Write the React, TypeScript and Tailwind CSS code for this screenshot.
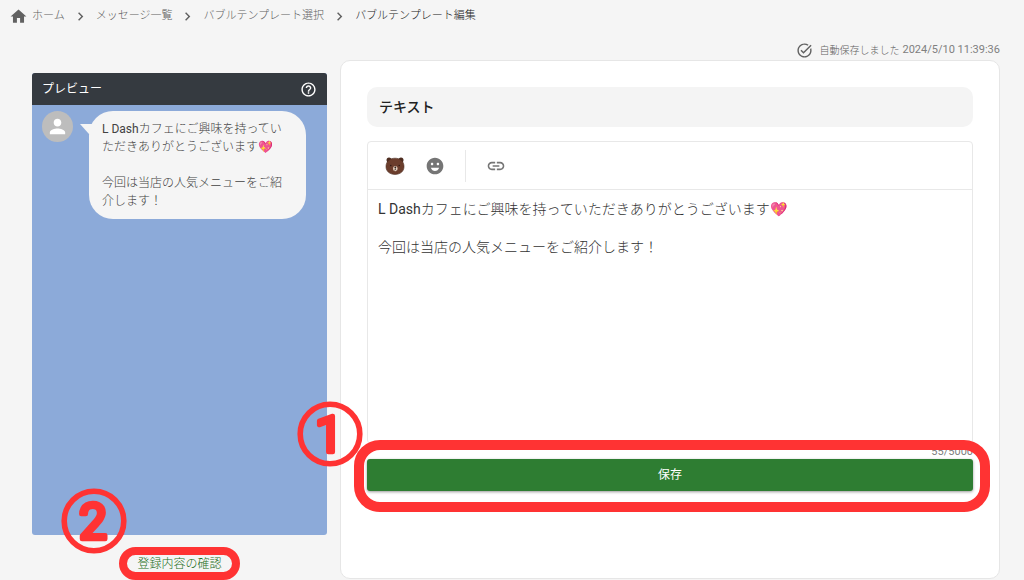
import { useState, type ReactNode } from "react";
import {
  MdChevronRight,
  MdEmojiEmotions,
  MdHelpOutline,
  MdHome,
  MdLink,
  MdPerson,
  MdTaskAlt,
} from "react-icons/md";

const MESSAGE =
  "L Dashカフェにご興味を持っていただきありがとうございます💖\n\n今回は当店の人気メニューをご紹介します！";

function Breadcrumbs() {
  return (
    <nav aria-label="breadcrumb" className="pt-[7px] pb-4 pl-[9px]">
      <ol className="flex h-[18px] items-center text-[11px] text-[#616161]">
        <li>
          <a href="#home" className="flex items-center gap-1">
            <MdHome className="size-[19px] text-[#616161]" />
            ホーム
          </a>
        </li>
        <Separator />
        <li>
          <a href="#messages">メッセージ一覧</a>
        </li>
        <Separator />
        <li>
          <a href="#templates">バブルテンプレート選択</a>
        </li>
        <Separator />
        <li aria-current="page" className="text-[#212121]">
          バブルテンプレート編集
        </li>
      </ol>
    </nav>
  );
}

function Separator() {
  return (
    <li aria-hidden="true" className="mx-[7px]">
      <MdChevronRight className="size-[17px] text-[#616161]" />
    </li>
  );
}

function StepMark({ children }: { children: ReactNode }) {
  return (
    <svg viewBox="0 0 66 66" className="size-[66px]">
      <circle cx="33" cy="33" r="29.8" fill="none" stroke="#ff3333" strokeWidth="5.6" />
      <text
        x="32"
        y="51"
        textAnchor="middle"
        fill="#ff3333"
        stroke="#ff3333"
        strokeWidth="4.500"
        strokeLinejoin="round"
        className="font-['Roboto',sans-serif] text-[50px] font-normal"
      >
        {children}
      </text>
    </svg>
  );
}

function BearIcon() {
  return (
    <svg viewBox="0 0 20 20" className="size-5">
      <circle cx="4" cy="4" r="2.500" fill="#4e2c20" />
      <circle cx="16" cy="4" r="2.500" fill="#4e2c20" />
      <path
        d="M10 2.200c5.300 0 9 3.200 9 8.400 0 4.800-3.600 7.800-9 7.800s-9-3-9-7.800C1 5.400 4.700 2.200 10 2.200z"
        fill="#6b3d2c"
        stroke="#4a2a1f"
        strokeWidth=".6"
      />
      <circle cx="5.800" cy="9.500" r=".7" fill="#2a1712" />
      <circle cx="14.200" cy="9.500" r=".7" fill="#2a1712" />
      <ellipse cx="10.300" cy="12.600" rx="2.200" ry="2.700" fill="#e9d3c0" />
      <ellipse cx="10.300" cy="11.200" rx="1" ry=".8" fill="#1d1210" />
      <path d="M10.300 11.500v2.200M9.200 14.300l1.100-.8 1.100.8" stroke="#1d1210" strokeWidth=".6" fill="none" />
    </svg>
  );
}

function Preview({ text }: { text: string }) {
  return (
    <section className="flex min-h-[462px] flex-col overflow-hidden rounded-[3px] bg-[#8caad9]">
      <header className="flex h-8 items-center justify-between bg-[#353a40] px-[10px] text-white">
        <h2 className="font-['Roboto','Noto_Sans_CJK_JP',sans-serif] text-xs font-normal">プレビュー</h2>
        <button type="button" aria-label="ヘルプ">
          <MdHelpOutline className="size-[17px]" />
        </button>
      </header>
      <div className="flex items-start px-[10px] pt-[6px]">
        <span className="flex size-[31px] shrink-0 items-center justify-center rounded-full bg-[#bdbdbd]">
          <MdPerson className="size-[23px] text-white" />
        </span>
        <div className="relative ml-4 w-[217px] rounded-[24px] bg-[#f5f5f5] px-[13px] py-[9px] text-xs leading-[18px] whitespace-pre-wrap text-[#424242]">
          <svg viewBox="0 0 14 10" className="absolute top-[13px] -left-[9px] h-[10px] w-[14px]">
            <path d="M0 0h14v10H9z" fill="#f5f5f5" />
          </svg>
          {text}
        </div>
      </div>
    </section>
  );
}

export default function App() {
  const [text, setText] = useState(MESSAGE);

  return (
    <div className="min-h-screen bg-[#f5f5f5] font-['Roboto','Noto_Sans_CJK_JP_Light','Noto_Sans_CJK_JP',sans-serif] font-normal">
      <Breadcrumbs />
      <main className="flex items-start gap-[13px] pr-6 pl-8">
        <aside className="w-[295px] shrink-0 pt-8">
          <div className="relative">
            <Preview text={text} />
            <div className="absolute -bottom-[19px] left-[29px]">
              <StepMark>2</StepMark>
            </div>
          </div>
          <div className="flex justify-center pt-3">
            <a
              href="#confirm"
              className="flex h-[33px] items-center rounded-full border-8 border-[#ff3333] px-[10px] text-xs whitespace-nowrap text-[#1b6e20]"
            >
              登録内容の確認
            </a>
          </div>
        </aside>

        <div className="min-w-0 flex-1">
          <p className="flex h-[19px] items-center justify-end text-[#616161]">
            <MdTaskAlt className="mr-[6px] size-[17px]" />
            <span className="text-[10px]">自動保存しました</span>
            <time className="ml-[3px] text-[11px] text-[#808080]">2024/5/10 11:39:36</time>
          </p>
          <section className="rounded-[10px] border border-[#e6e6e6] bg-white px-[26px] pt-[26px] pb-[87px]">
            <h1 className="flex h-10 items-center rounded-[10px] bg-[#f4f4f4] px-3 font-['Roboto','Noto_Sans_CJK_JP',sans-serif] text-sm font-medium text-[#212121]">
              テキスト
            </h1>
            <div className="mt-[14px] rounded-[4px] border border-[#e8e8e8]">
              <div className="flex h-12 items-center border-b border-[#e8e8e8] pl-[17px] text-[#757575]">
                <button type="button" aria-label="LINE絵文字">
                  <BearIcon />
                </button>
                <button type="button" aria-label="絵文字" className="ml-5">
                  <MdEmojiEmotions className="size-5" />
                </button>
                <span className="ml-5 h-8 w-px bg-[#e8e8e8]" />
                <button type="button" aria-label="リンク" className="ml-5">
                  <MdLink className="size-5" />
                </button>
              </div>
              <textarea
                aria-label="テキスト"
                value={text}
                onChange={(event) => setText(event.target.value)}
                className="block h-[253px] w-full resize-none px-[10px] py-[10px] text-sm leading-[19px] text-[#333333] outline-none"
              />
            </div>
            <p className="h-[15px] text-right text-[11px] leading-[15px] text-[#808080]">55/5000</p>
            <div className="relative">
              <button
                type="button"
                className="block h-8 w-full rounded-[3px] bg-[#2e7d32] font-['Roboto','Noto_Sans_CJK_JP',sans-serif] text-xs text-white shadow-[0_1px_3px_rgba(0,0,0,0.4)]"
              >
                保存
              </button>
              <div className="pointer-events-none absolute -top-[19px] -right-[17px] -bottom-[21px] -left-[13px] rounded-[26px] border-[10px] border-[#ff3333]" />
              <div className="pointer-events-none absolute -top-[58px] -left-[70px]">
                <StepMark>1</StepMark>
              </div>
            </div>
          </section>
        </div>
      </main>
    </div>
  );
}
